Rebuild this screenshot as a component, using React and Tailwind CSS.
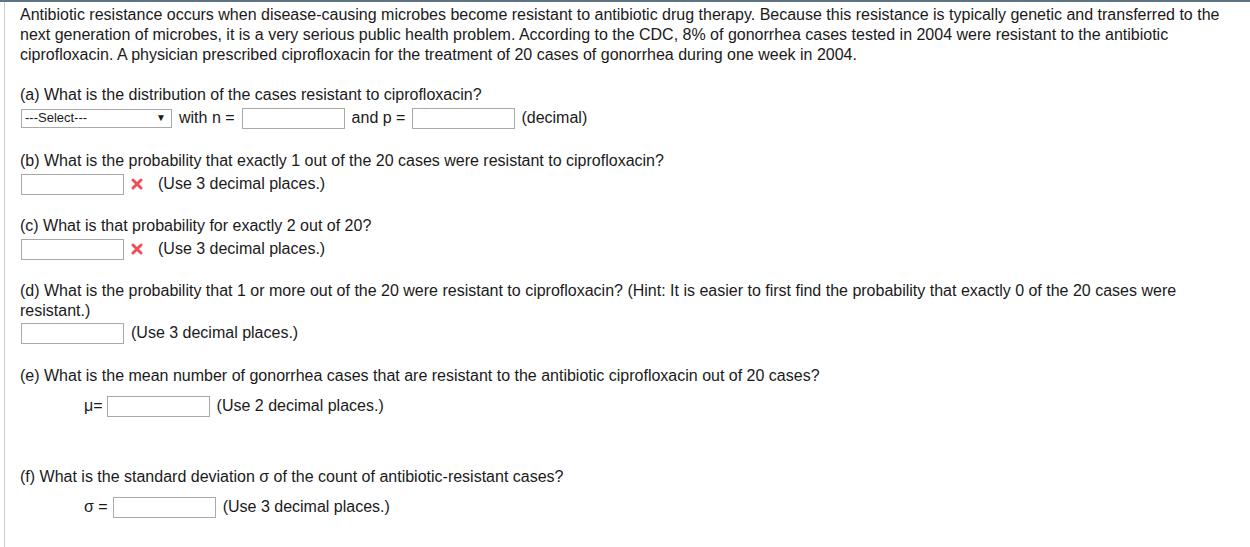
import React from 'react';

const Box = ({ className = '' }) => (
  <input
    type="text"
    className={`h-[21px] w-[103px] border border-[#a9a9a9] bg-white px-1 outline-none ${className}`}
  />
);

const Wrong = () => (
  <svg width="12" height="12" viewBox="0 0 12 12" className="mx-[7px] shrink-0">
    <path d="M2 2 L10 10 M10 2 L2 10" stroke="#ef4f55" strokeWidth="3" strokeLinecap="round" />
  </svg>
);

const App = () => {
  return (
    <div
      className="w-[1250px] h-[547px] bg-white border-t-2 border-[#5f7482] text-[#1a1a1a] text-[16px] leading-[20px] overflow-hidden"
      style={{ fontFamily: '"Liberation Sans", Arial, sans-serif' }}
    >
      <div className="ml-[4px] h-full border-l border-[#cfcfcf] pl-[15px] pt-[3px] pr-[16px]">
        <p>
          Antibiotic resistance occurs when disease-causing microbes become resistant to antibiotic drug therapy. Because this resistance is typically genetic and transferred to the next generation of microbes, it is a very serious public health problem. According to the CDC, 8% of gonorrhea cases tested in 2004 were resistant to the antibiotic ciprofloxacin. A physician prescribed ciprofloxacin for the treatment of 20 cases of gonorrhea during one week in 2004.
        </p>

        {/* (a) */}
        <p className="mt-[20px]">(a) What is the distribution of the cases resistant to ciprofloxacin?</p>
        <div className="mt-[2px] flex items-center h-[22px]">
          <div className="ml-[1px] flex h-[19px] w-[151px] items-center justify-between border border-[#a9a9a9] pl-[3px] pr-[5px] text-[13px]">
            <span>---Select---</span>
            <span className="text-[10px]">▼</span>
          </div>
          <span className="ml-[7px] mr-[7px]">with n =</span>
          <Box />
          <span className="ml-[7px] mr-[7px]">and p =</span>
          <Box />
          <span className="ml-[6px]">(decimal)</span>
        </div>

        {/* (b) */}
        <p className="mt-[22px]">(b) What is the probability that exactly 1 out of the 20 cases were resistant to ciprofloxacin?</p>
        <div className="mt-[2px] flex items-center h-[22px]">
          <Box className="ml-[1px]" />
          <Wrong />
          <span className="ml-[8px]">(Use 3 decimal places.)</span>
        </div>

        {/* (c) */}
        <p className="mt-[21px]">(c) What is that probability for exactly 2 out of 20?</p>
        <div className="mt-[2px] flex items-center h-[22px]">
          <Box className="ml-[1px]" />
          <Wrong />
          <span className="ml-[8px]">(Use 3 decimal places.)</span>
        </div>

        {/* (d) */}
        <p className="mt-[21px]">
          (d) What is the probability that 1 or more out of the 20 were resistant to ciprofloxacin? (Hint: It is easier to first find the probability that exactly 0 of the 20 cases were resistant.)
        </p>
        <div className="mt-[1px] flex items-center h-[22px]">
          <Box className="ml-[1px]" />
          <span className="ml-[7px]">(Use 3 decimal places.)</span>
        </div>

        {/* (e) */}
        <p className="mt-[22px]">(e) What is the mean number of gonorrhea cases that are resistant to the antibiotic ciprofloxacin out of 20 cases?</p>
        <div className="mt-[9px] flex items-center h-[22px]">
          <span className="ml-[64px] mr-[4px]">μ=</span>
          <Box />
          <span className="ml-[7px]">(Use 2 decimal places.)</span>
        </div>

        {/* (f) */}
        <p className="mt-[50px]">(f) What is the standard deviation σ of the count of antibiotic-resistant cases?</p>
        <div className="mt-[9px] flex items-center h-[22px]">
          <span className="ml-[64px] mr-[5px]">σ =</span>
          <Box />
          <span className="ml-[7px]">(Use 3 decimal places.)</span>
        </div>
      </div>
    </div>
  );
};

export default App;
